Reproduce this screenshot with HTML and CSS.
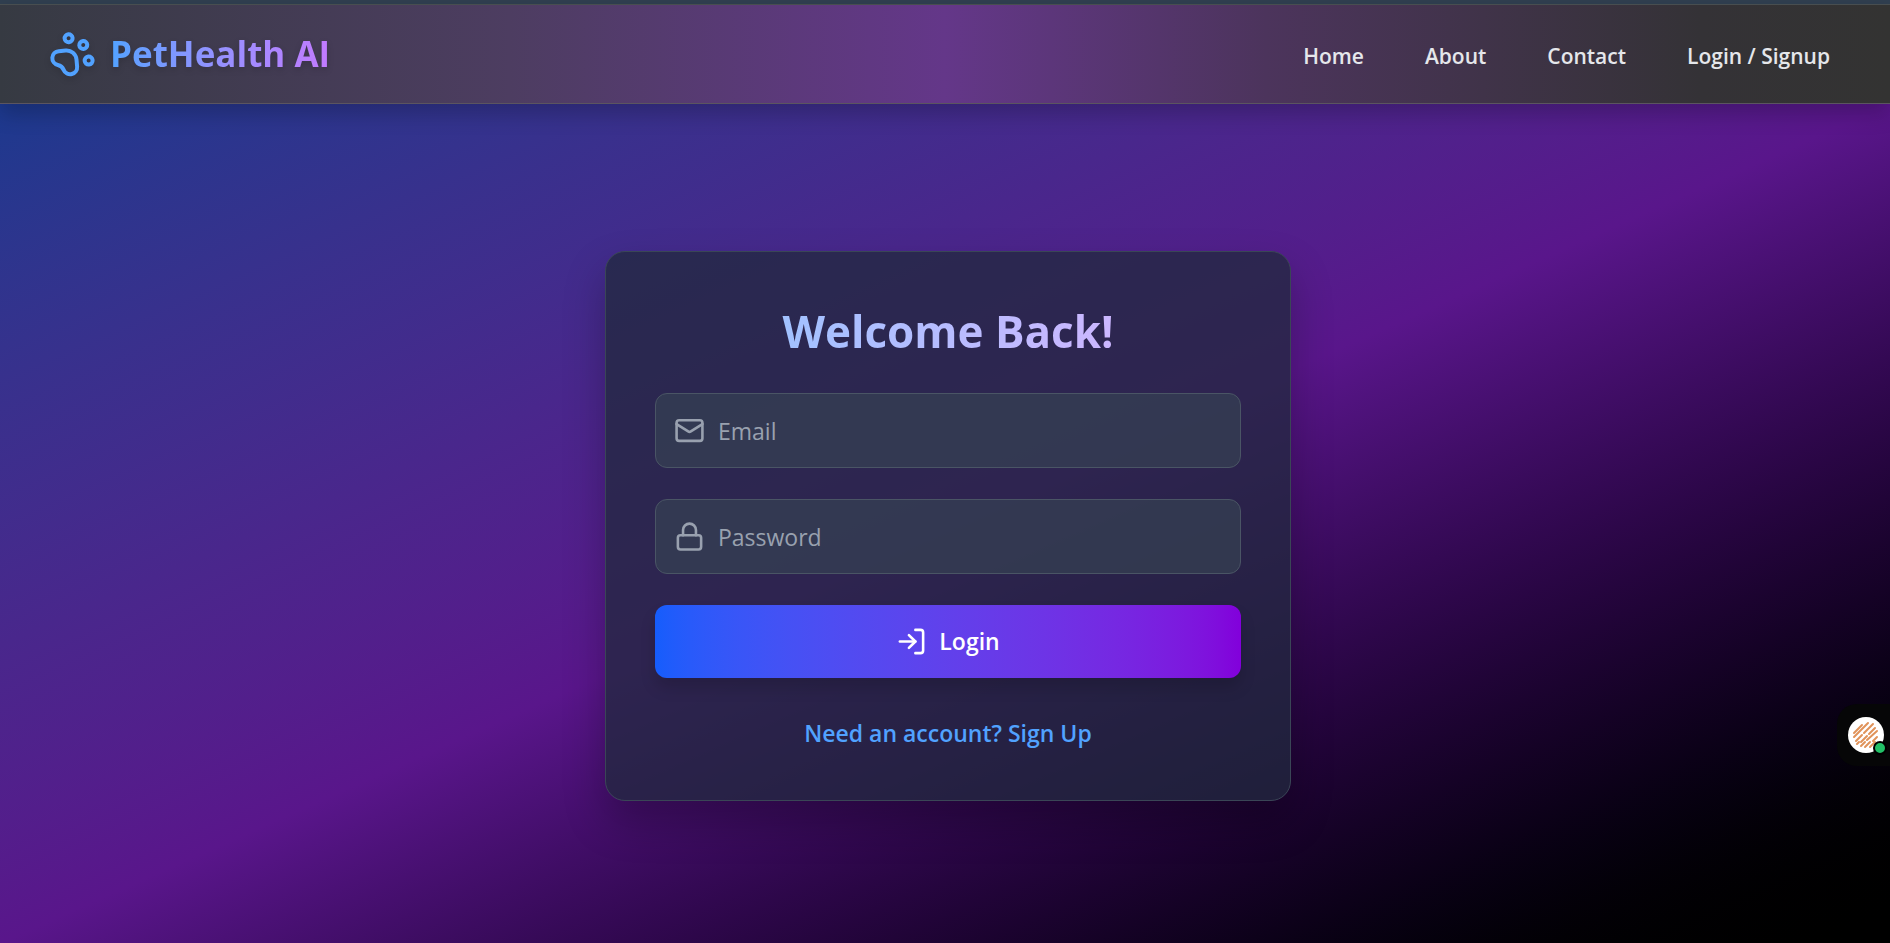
FILE: index.html
```html
<!DOCTYPE html>
<html lang="en">
<head>
    <meta charset="UTF-8">
    <meta name="viewport" content="width=device-width, initial-scale=1.0">
    <title>PetHealth AI - Login</title>
    <link rel="stylesheet" href="styles.css">
</head>
<body>
    <header class="navbar">
        <a class="brand" href="#">
            <svg class="brand-icon" viewBox="0 0 24 24" aria-hidden="true">
                <circle cx="11" cy="4" r="2"/>
                <circle cx="18" cy="8" r="2"/>
                <circle cx="20" cy="16" r="2"/>
                <path d="M9 10a5 5 0 0 1 5 5v3.5a3.5 3.5 0 0 1-6.84 1.045Q6.52 17.48 4.46 16.84A3.5 3.5 0 0 1 5.5 10Z"/>
            </svg>
            <span class="brand-name">PetHealth AI</span>
        </a>
        <nav class="nav-links">
            <a href="#">Home</a>
            <a href="#">About</a>
            <a href="#">Contact</a>
            <a href="#">Login / Signup</a>
        </nav>
    </header>

    <main>
        <section class="card">
            <h1>Welcome Back!</h1>
            <form id="loginForm">
                <label class="field" for="email">
                    <svg class="icon" viewBox="0 0 24 24" aria-hidden="true">
                        <rect x="2" y="4" width="20" height="16" rx="2"/>
                        <path d="m22 7-8.97 5.7a1.94 1.94 0 0 1-2.06 0L2 7"/>
                    </svg>
                    <input type="email" id="email" name="email" placeholder="Email">
                </label>
                <label class="field" for="password">
                    <svg class="icon" viewBox="0 0 24 24" aria-hidden="true">
                        <rect x="3" y="11" width="18" height="11" rx="2"/>
                        <path d="M7 11V7a5 5 0 0 1 10 0v4"/>
                    </svg>
                    <input type="password" id="password" name="password" placeholder="Password">
                </label>
                <button type="submit" class="login-button">
                    <svg class="icon" viewBox="0 0 24 24" aria-hidden="true">
                        <path d="M15 3h4a2 2 0 0 1 2 2v14a2 2 0 0 1-2 2h-4"/>
                        <path d="m10 17 5-5-5-5"/>
                        <path d="M15 12H3"/>
                    </svg>
                    <span>Login</span>
                </button>
            </form>
            <a class="switch-link" href="#">Need an account? Sign Up</a>
        </section>
    </main>

    <aside class="assistant">
        <button type="button" class="assistant-button" aria-label="Open assistant">
            <svg viewBox="0 0 38 38" aria-hidden="true">
                <circle cx="19" cy="19" r="18" fill="#fff"/>
                <g stroke="#e0935a" stroke-width="2" stroke-linecap="round">
                    <path d="M7 17l8-8M7 21L21 7M9 25l6-6M17 17l9-9M10 28l2-2M14 26l6-6M22 18l6-6M14 30l4-4M20 24l10-9M18 31l5-5M26 25l4-4M23 31l5-5"/>
                </g>
            </svg>
            <span class="status-dot"></span>
        </button>
    </aside>
</body>
</html>
```

FILE: styles.css
```css
* {
    box-sizing: border-box;
}

body {
    display: flex;
    flex-direction: column;
    min-height: 100vh;
    margin: 0;
    font-family: "Open Sans", "Noto Sans", sans-serif;
    background-color: #303f50;
    color: white;
}

a {
    text-decoration: none;
}

svg {
    display: block;
}

.navbar {
    position: relative;
    z-index: 1;
    display: flex;
    align-items: center;
    justify-content: space-between;
    height: 100px;
    margin-top: 4px;
    padding: 0 60px 0 48px;
    border-top: 1px solid #484e50;
    border-bottom: 1px solid #5b5560;
    background: linear-gradient(to right, #363a42, #4d3d61 27%, #643789 50%, #4c345c 67%, #343236 90%, #333332);
    box-shadow: 0 10px 20px rgba(0, 0, 0, 0.2);
}

.brand {
    display: flex;
    align-items: center;
    gap: 14px;
    filter: drop-shadow(0 3px 3px rgba(0, 0, 0, 0.15));
}

.brand-icon,
.icon {
    flex: none;
    fill: none;
    stroke: currentColor;
    stroke-width: 2;
    stroke-linecap: round;
    stroke-linejoin: round;
}

.brand-icon {
    width: 48px;
    height: 48px;
    color: #51a2ff;
    transform: rotate(-5deg);
}

.brand-name {
    font-size: 35px;
    font-weight: 700;
    line-height: 48px;
    background: linear-gradient(to right in oklab, #51a2ff, #c27aff);
    background-clip: text;
    color: transparent;
}

.nav-links {
    display: flex;
    gap: 61px;
    padding-top: 3px;
}

.nav-links a {
    color: #e5e7eb;
    font-size: 21px;
    font-weight: 600;
    line-height: 28px;
}

main {
    display: flex;
    flex: 1;
    align-items: center;
    justify-content: center;
    padding: 28px 24px 24px 30px;
    background: linear-gradient(to bottom right in oklab, #1c398e, #59168b, #000);
}

.card {
    width: 100%;
    max-width: 686px;
    padding: 49px;
    border: 1px solid #3a4656;
    border-radius: 20px;
    background-color: rgba(33, 41, 62, 0.76);
    box-shadow: 0 20px 40px rgba(0, 0, 0, 0.25);
    text-align: center;
}

h1 {
    margin: 0 0 32px;
    font-size: 44px;
    font-weight: 700;
    line-height: 60px;
    background: linear-gradient(to right in oklab, #8ec5ff, #dab2ff);
    background-clip: text;
    color: transparent;
}

form {
    display: flex;
    flex-direction: column;
    gap: 31px;
}

.field {
    display: flex;
    align-items: center;
    gap: 13px;
    height: 75px;
    padding: 0 18px;
    border: 1px solid #4a5565;
    border-radius: 12px;
    background-color: rgba(54, 65, 83, 0.7);
    color: #99a1af;
}

.icon {
    width: 31px;
    height: 31px;
}

.field input {
    flex: 1;
    min-width: 0;
    padding: 2px 0 0;
    border: none;
    outline: none;
    background: none;
    color: white;
    font-family: inherit;
    font-size: 23px;
    line-height: 32px;
}

.field input::placeholder {
    color: #99a1af;
    opacity: 1;
}

.login-button {
    display: flex;
    align-items: center;
    justify-content: center;
    gap: 12px;
    height: 73px;
    padding: 0;
    border: none;
    border-radius: 12px;
    background: linear-gradient(to right in oklab, #155dfc, #8200db);
    box-shadow: 0 10px 15px rgba(0, 0, 0, 0.15);
    color: white;
    font-family: inherit;
    font-size: 23px;
    font-weight: 600;
    cursor: pointer;
}

.switch-link {
    display: inline-block;
    margin-top: 37px;
    color: #51a2ff;
    font-size: 23px;
    font-weight: 600;
    line-height: 36px;
}

.assistant {
    position: fixed;
    z-index: 2;
    top: 704px;
    right: 0;
    padding: 12px 5px 12px 10px;
    border-radius: 20px 0 0 20px;
    background-color: #060607;
}

.assistant-button {
    position: relative;
    display: block;
    padding: 0;
    border: none;
    background: none;
    cursor: pointer;
}

.assistant-button svg {
    width: 38px;
    height: 38px;
}

.status-dot {
    position: absolute;
    right: -2px;
    bottom: -1px;
    width: 14px;
    height: 14px;
    border: 2px solid black;
    border-radius: 50%;
    background-color: #22c067;
}
```
